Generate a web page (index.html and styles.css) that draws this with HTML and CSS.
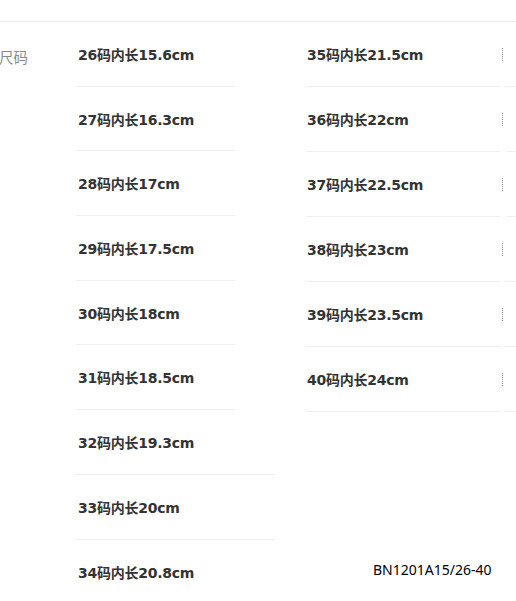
FILE: index.html
```html
<!DOCTYPE html>
<html lang="zh">
<head>
<meta charset="utf-8">
<link rel="stylesheet" href="styles.css">
</head>
<body>
<div class="page">
  <div class="table">
    <div class="label-col">
      <div class="label">尺码</div>
    </div>
    <ul class="list list-left">
      <li class="item short">26码内长15.6cm</li>
      <li class="item short">27码内长16.3cm</li>
      <li class="item short">28码内长17cm</li>
      <li class="item short">29码内长17.5cm</li>
      <li class="item short">30码内长18cm</li>
      <li class="item short">31码内长18.5cm</li>
      <li class="item long">32码内长19.3cm</li>
      <li class="item long">33码内长20cm</li>
      <li class="item last">34码内长20.8cm</li>
    </ul>
    <div class="right-col">
      <ul class="list list-right">
        <li class="item">35码内长21.5cm</li>
        <li class="item">36码内长22cm</li>
        <li class="item">37码内长22.5cm</li>
        <li class="item">38码内长23cm</li>
        <li class="item">39码内长23.5cm</li>
        <li class="item">40码内长24cm</li>
      </ul>
      <div class="code">BN1201A15/26-40</div>
    </div>
    <ul class="list list-clip">
      <li class="clip-item"><span class="mark"></span></li>
      <li class="clip-item"><span class="mark"></span></li>
      <li class="clip-item"><span class="mark"></span></li>
      <li class="clip-item"><span class="mark"></span></li>
      <li class="clip-item"><span class="mark"></span></li>
      <li class="clip-item"><span class="mark"></span></li>
    </ul>
  </div>
</div>
</body>
</html>
```

FILE: styles.css
```css
html, body {
  margin: 0;
  padding: 0;
  background: #fff;
}

.page {
  width: 516px;
  height: 601px;
  overflow: hidden;
  padding-top: 21px;
  box-sizing: border-box;
}

.table {
  display: grid;
  grid-template-columns: 76px 230px 196px 14px;
  border-top: 1px solid #eeeeee;
  align-items: start;
}

.label-col {
  padding-top: 2px;
}

.label {
  height: 64.7px;
  display: flex;
  align-items: center;
  font-family: "Noto Sans CJK SC", sans-serif;
  font-size: 14.5px;
  color: #8a8a8a;
  margin-left: -1px;
}

.list {
  list-style: none;
  margin: 0;
  padding: 0;
}

.item {
  height: 64.7px;
  box-sizing: border-box;
  display: flex;
  align-items: center;
  font-family: "DejaVu Sans", "Noto Sans CJK SC", sans-serif;
  font-weight: bold;
  font-size: 14px;
  letter-spacing: -0.25px;
  color: #333;
  border-bottom: 1px solid #efefef;
}

.list-left .item {
  padding-left: 2px;
}

.list-left .short {
  width: 159px;
}

.list-left .long {
  width: 199px;
}

.list-left .last {
  border-bottom: none;
}

.list-right .item {
  height: 65px;
  padding-left: 1px;
  width: 194px;
}

.code {
  margin-top: 148px;
  padding-left: 67px;
  font-family: "Noto Sans", sans-serif;
  font-size: 14px;
  color: #000;
}

.clip-item {
  height: 65px;
  box-sizing: border-box;
  display: flex;
  align-items: center;
  border-bottom: 1px solid #efefef;
  margin-left: 3px;
}

.mark {
  display: block;
  width: 0;
  height: 13px;
  margin-left: -3px;
  border-left: 1px dotted #999;
}
```
